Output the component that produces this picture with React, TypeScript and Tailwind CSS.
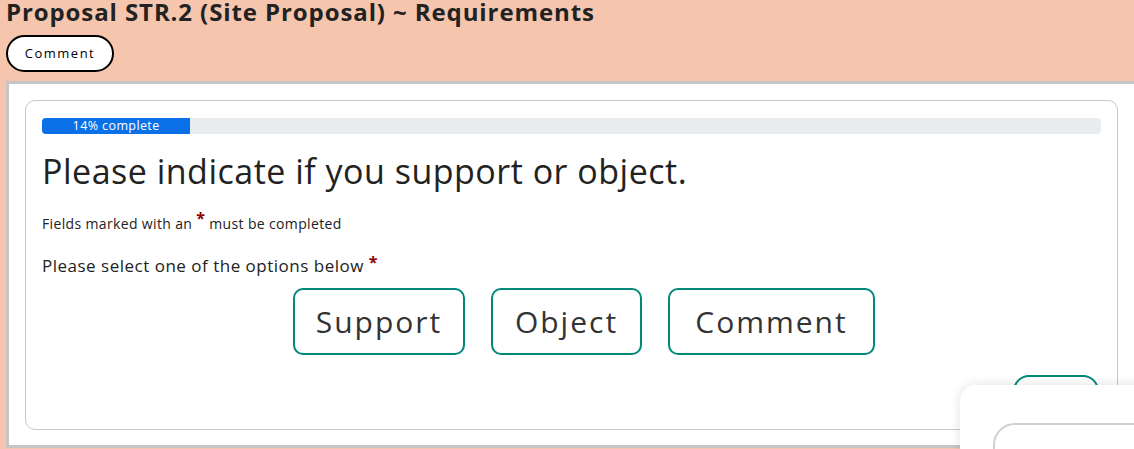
import React from "react";

const font = { fontFamily: '"Open Sans", "Liberation Sans", sans-serif' };

export default function App() {
  return (
    <div
      className="relative h-[449px] w-[1134px] overflow-hidden bg-[#f5c6ad] text-[#212529]"
      style={font}
    >
      <h1 className="pl-[6px] text-[24px] font-bold leading-[24px] tracking-[0.9px] text-[#222]">
        Proposal STR.2 (Site Proposal) ~ Requirements
      </h1>
      <div className="pl-[6px] pt-[11px]">
        <button className="h-[37px] w-[108px] rounded-full border-2 border-black bg-white text-[13px] tracking-[1.5px] text-black">
          Comment
        </button>
      </div>
      <div className="ml-[6px] mt-[9px] border-y-[3px] border-l-[3px] border-[#c6c6c6] bg-white pb-[15px] pl-4 pr-4 pt-4">
        <div className="h-[330px] rounded-[10px] border border-[#c8c8c8] px-4 pt-[17px]">
          <div className="h-4 w-full overflow-hidden rounded-[4px] bg-[#e9ecef]">
            <div className="flex h-full w-[14%] items-center justify-center bg-[#0a70e8] text-[12.5px] leading-none tracking-[0.4px] text-white">
              14% complete
            </div>
          </div>
          <h2 className="mt-[17px] text-[34px] font-medium leading-[40px] tracking-[0.5px] text-[#222]">
            Please indicate if you support or object.
          </h2>
          <p className="mt-[22px] text-[14px] leading-[20px] tracking-[0.35px] text-[#222]">
            Fields marked with an{" "}
            <span className="relative top-[-5px] text-[16px] font-bold text-[#8b0000]">*</span>{" "}
            must be completed
          </p>
          <p className="mt-[21px] text-[17px] leading-[22px] tracking-[0.5px] text-[#222]">
            Please select one of the options below{" "}
            <span className="relative top-[-4px] text-[16px] font-bold text-[#8b0000]">*</span>
          </p>
          <div className="mt-[11px] flex justify-center gap-[26px] pl-[25px]">
            <button className="h-[67px] w-[172px] rounded-[10px] border-2 border-[#00897b] text-[30px] tracking-[2px] text-[#333]">
              Support
            </button>
            <button className="h-[67px] w-[151px] rounded-[10px] border-2 border-[#00897b] text-[30px] tracking-[2px] text-[#333]">
              Object
            </button>
            <button className="h-[67px] w-[207px] rounded-[10px] border-2 border-[#00897b] text-[30px] tracking-[2px] text-[#333]">
              Comment
            </button>
          </div>
          <div className="mt-[20px] flex justify-end pr-[2px]">
            <div className="h-[50px] w-[86px] rounded-[16px] border-2 border-[#00897b]" />
          </div>
        </div>
      </div>
      <div className="absolute left-[960px] top-[385px] h-[80px] w-[200px] rounded-tl-[16px] bg-white shadow-[0_0_12px_rgba(0,0,0,0.12)]">
        <div className="absolute left-[33px] top-[38px] h-[60px] w-[200px] rounded-tl-[22px] border-2 border-[#d0d0d0]" />
      </div>
    </div>
  );
}
